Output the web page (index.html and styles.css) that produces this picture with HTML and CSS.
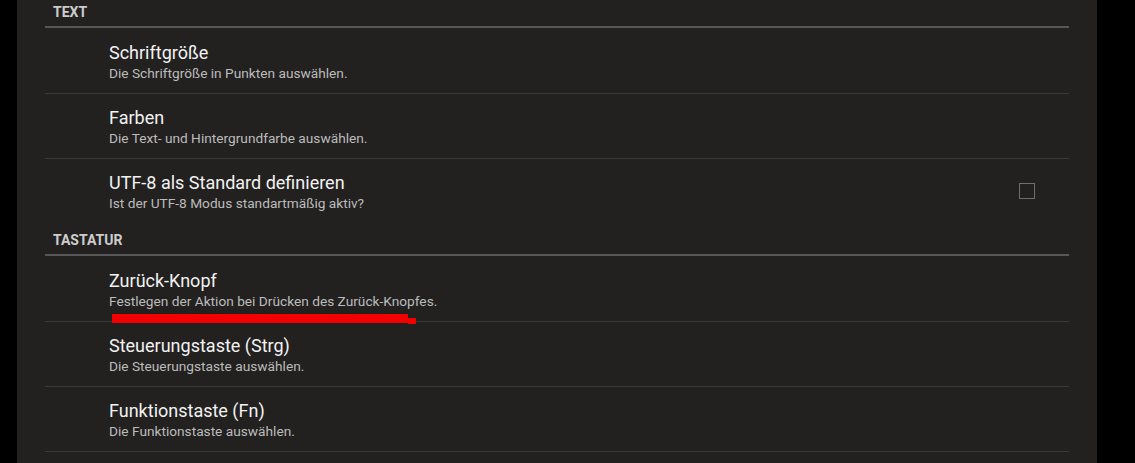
FILE: index.html
```html
<!DOCTYPE html>
<html lang="de">
<head>
<meta charset="utf-8">
<link rel="stylesheet" href="styles.css">
</head>
<body>
<div class="panel">
  <div class="list">
    <div class="section-header">TEXT</div>
    <div class="row">
      <div class="texts">
        <div class="title">Schriftgröße</div>
        <div class="summary">Die Schriftgröße in Punkten auswählen.</div>
      </div>
    </div>
    <div class="row">
      <div class="texts">
        <div class="title">Farben</div>
        <div class="summary">Die Text- und Hintergrundfarbe auswählen.</div>
      </div>
    </div>
    <div class="row last">
      <div class="texts">
        <div class="title">UTF-8 als Standard definieren</div>
        <div class="summary">Ist der UTF-8 Modus standartmäßig aktiv?</div>
      </div>
      <div class="checkbox"></div>
    </div>
    <div class="section-header">TASTATUR</div>
    <div class="row">
      <div class="texts">
        <div class="title">Zurück-Knopf</div>
        <div class="summary">Festlegen der Aktion bei Drücken des Zurück-Knopfes.</div>
      </div>
      <svg class="mark" width="320" height="16" viewBox="0 0 320 16">
        <polygon points="2,2 298,2 298,6 306,6 306,12 298,12 298,11 2,11" fill="#f20000"/>
      </svg>
    </div>
    <div class="row">
      <div class="texts">
        <div class="title">Steuerungstaste (Strg)</div>
        <div class="summary">Die Steuerungstaste auswählen.</div>
      </div>
    </div>
    <div class="row">
      <div class="texts">
        <div class="title">Funktionstaste (Fn)</div>
        <div class="summary">Die Funktionstaste auswählen.</div>
      </div>
    </div>
  </div>
</div>
</body>
</html>
```
FILE: styles.css
```css
html, body {
  margin: 0;
  padding: 0;
  background: #000;
  height: 100%;
  overflow: hidden;
}

body {
  font-family: Roboto, "Noto Sans", sans-serif;
}

.panel {
  margin-left: 17px;
  width: 1080px;
  min-height: 100%;
  background: #222120;
}

.list {
  margin: 0 28px;
  position: relative;
  top: -4px;
}

.section-header {
  box-sizing: border-box;
  height: 32px;
  padding: 2px 0 0 8px;
  margin-bottom: 1px;
  border-bottom: 2px solid #575757;
  display: flex;
  align-items: center;
  font-size: 14px;
  font-weight: bold;
  color: #cdcdcd;
}

.row {
  position: relative;
  box-sizing: border-box;
  height: 65px;
  padding: 13px 0 0 64px;
  border-bottom: 1px solid #3a3a3a;
  display: flex;
  align-items: flex-start;
}

.row.last {
  border-bottom: none;
}

.texts {
  flex: 1;
}

.title {
  font-size: 18px;
  line-height: 21px;
  color: #f2f2f2;
}

.summary {
  font-size: 13.7px;
  line-height: 21px;
  color: #bcbcbc;
}

.checkbox {
  width: 14px;
  height: 14px;
  border: 1px solid #6e6e6e;
  margin: 11px 34px 0 0;
}

.mark {
  position: absolute;
  left: 65px;
  top: 55px;
}
```
